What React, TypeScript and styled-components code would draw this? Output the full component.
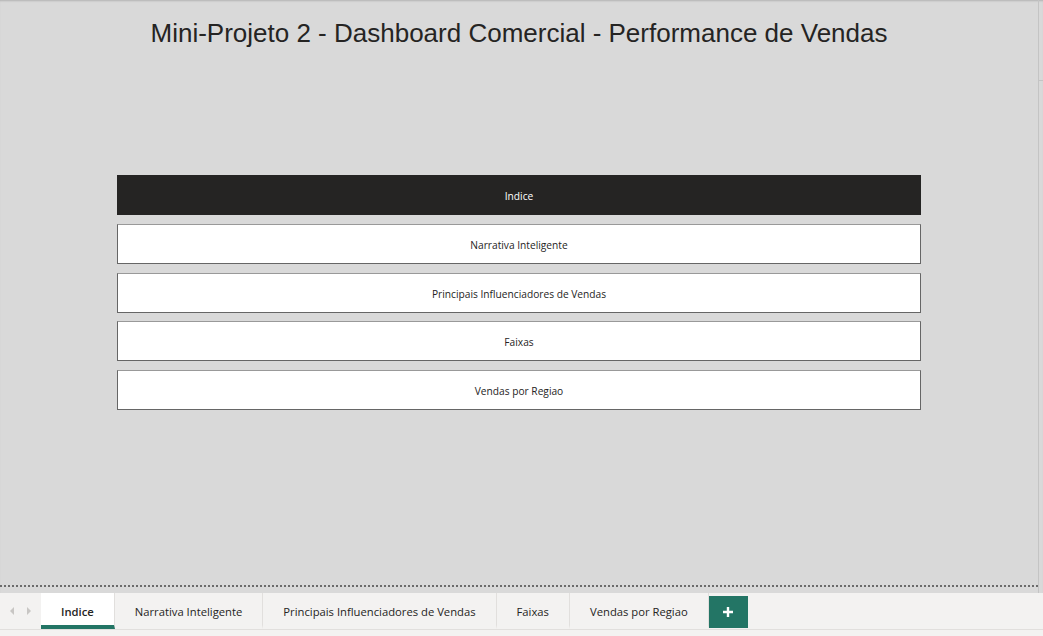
import styled, { createGlobalStyle } from "styled-components";

const GlobalStyle = createGlobalStyle`
  html, body {
    margin: 0;
    padding: 0;
    background: #f3f2f1;
  }
  * {
    box-sizing: border-box;
  }
`;

const Page = styled.div`
  display: flex;
  flex-direction: column;
  width: 1043px;
  height: 636px;
  overflow: hidden;
  background: #f3f2f1;
`;

const Workspace = styled.div`
  display: flex;
  height: 593px;
  background: #d9d9d9;
  box-shadow: inset 0 2px 2px -1px rgba(0, 0, 0, 0.18);
`;

const Canvas = styled.main`
  display: flex;
  flex-direction: column;
  align-items: center;
  width: 1039px;
  height: 593px;
  padding-top: 17px;
  border-right: 1px solid #c4c4c4;
`;

const DottedEdge = styled.div`
  width: 100%;
  margin-top: auto;
  margin-bottom: 6px;
  border-bottom: 2px dotted #6b6b6b;
`;

const ScrollStub = styled.div`
  flex: 1;
  height: 81px;
  border-bottom: 1px solid #c4c4c4;
`;

const Title = styled.h1`
  margin: 0;
  font-family: "Liberation Sans", Arial, sans-serif;
  font-weight: 400;
  font-size: 26px;
  line-height: 32px;
  color: #252423;
`;

const Menu = styled.nav`
  display: flex;
  flex-direction: column;
  gap: 8.75px;
  width: 804px;
  margin-top: 126px;
`;

const MenuButton = styled.button<{ $active?: boolean }>`
  height: 40px;
  padding: 2px 0 0;
  font-family: "Open Sans", "Noto Sans", sans-serif;
  font-size: 10.2px;
  color: ${({ $active }) => ($active ? "#ffffff" : "#252423")};
  background: ${({ $active }) => ($active ? "#252423" : "#ffffff")};
  border: 1px solid ${({ $active }) => ($active ? "#252423" : "#666666")};
  border-top-color: ${({ $active }) => ($active ? "#252423" : "#999999")};
  cursor: pointer;
`;

const TabBar = styled.div`
  display: flex;
  align-items: stretch;
  height: 37px;
  border-bottom: 1px solid #e1dfdd;
  background: #f3f2f1;
`;

const NavArrows = styled.div`
  display: flex;
  align-items: center;
  justify-content: space-around;
  width: 41px;
  padding: 0 3px;
`;

const Arrow = styled.span<{ $dir: "left" | "right" }>`
  width: 0;
  height: 0;
  border-top: 4px solid transparent;
  border-bottom: 4px solid transparent;
  ${({ $dir }) =>
    $dir === "left"
      ? "border-right: 4px solid #c8c6c4;"
      : "border-left: 4px solid #c8c6c4;"}
`;

const Tab = styled.div<{ $active?: boolean }>`
  display: flex;
  align-items: center;
  padding: 4px 20px 0;
  font-family: "Open Sans", "Noto Sans", sans-serif;
  font-size: 11.25px;
  font-weight: ${({ $active }) => ($active ? 600 : 400)};
  color: #252423;
  background: ${({ $active }) => ($active ? "#ffffff" : "transparent")};
  border-right: 1px solid #e1dfdd;
  border-bottom: 4px solid
    ${({ $active }) => ($active ? "#237565" : "transparent")};
  white-space: nowrap;
`;

const AddButton = styled.button`
  align-self: center;
  display: flex;
  align-items: center;
  justify-content: center;
  width: 39px;
  height: 32px;
  margin-top: 2px;
  padding: 0;
  border: 0;
  background: #237565;
  cursor: pointer;
`;

const pages = [
  "Indice",
  "Narrativa Inteligente",
  "Principais Influenciadores de Vendas",
  "Faixas",
  "Vendas por Regiao",
];

export default function App() {
  return (
    <Page>
      <GlobalStyle />
      <Workspace>
        <Canvas>
          <Title>Mini-Projeto 2 - Dashboard Comercial - Performance de Vendas</Title>
          <Menu>
            {pages.map((p, i) => (
              <MenuButton key={p} $active={i === 0}>
                {p}
              </MenuButton>
            ))}
          </Menu>
          <DottedEdge />
        </Canvas>
        <ScrollStub />
      </Workspace>
      <TabBar>
        <NavArrows>
          <Arrow $dir="left" />
          <Arrow $dir="right" />
        </NavArrows>
        {pages.map((p, i) => (
          <Tab key={p} $active={i === 0}>
            {p}
          </Tab>
        ))}
        <AddButton aria-label="Nova página">
          <svg width="12" height="12" viewBox="0 0 12 12">
            <path d="M6 1v10M1 6h10" stroke="#fff" strokeWidth="2.4" />
          </svg>
        </AddButton>
      </TabBar>
    </Page>
  );
}
